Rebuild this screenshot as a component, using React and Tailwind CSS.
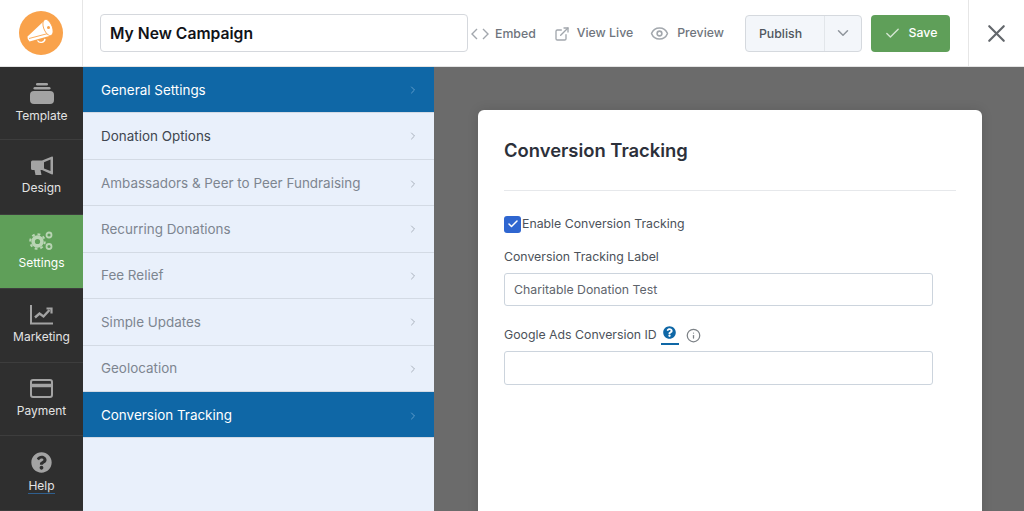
import { ChevronRight, ChevronDown, Check, X, Eye, ExternalLink, Info } from "lucide-react";
import { FaQuestionCircle } from "react-icons/fa";

const NAV_ITEMS = [
  { label: "General Settings", kind: "active", h: "h-[46px] pt-[1px]" },
  { label: "Donation Options", kind: "normal", h: "h-[47px]" },
  { label: "Ambassadors & Peer to Peer Fundraising", kind: "muted", h: "h-[46px] pt-[2px]" },
  { label: "Recurring Donations", kind: "muted", h: "h-[47px]" },
  { label: "Fee Relief", kind: "muted", h: "h-[46px]" },
  { label: "Simple Updates", kind: "muted", h: "h-[47px]" },
  { label: "Geolocation", kind: "muted", h: "h-[46px]" },
  { label: "Conversion Tracking", kind: "active", h: "h-[46px] pt-[2px]" },
];

const LogoIcon = () => (
  <svg width="44" height="44" viewBox="0 0 44 44">
    <circle cx="22" cy="22" r="22" fill="#f9a24b" />
    <path d="M8.5 25.5L25.5 9.5L32 24.5L10.5 30.5Q8 28.5 8.5 25.5Z" fill="white" />
    <path d="M10 27.5L29 22.5" stroke="#f9a24b" strokeWidth="0.9" fill="none" />
    <ellipse cx="29" cy="16.5" rx="4.3" ry="8.6" transform="rotate(-22 29 16.5)" fill="white" stroke="#f9a24b" strokeWidth="0.9" />
    <circle cx="29.5" cy="16.5" r="1.5" fill="#f9a24b" />
    <path d="M18.5 29.5a4 3.6 0 0 0 7.5 -1.6" stroke="white" strokeWidth="1.3" fill="none" />
  </svg>
);

const TemplateIcon = () => (
  <svg width="24" height="21" viewBox="0 0 24 21" fill="#a3a3a3">
    <rect x="6" y="0" width="12" height="2.6" rx="1.3" />
    <rect x="3.5" y="4" width="17" height="2.6" rx="1.3" />
    <rect x="0" y="8" width="24" height="13" rx="4" />
  </svg>
);

const DesignIcon = () => (
  <svg width="22" height="20" viewBox="0 0 22 20" fill="#a3a3a3">
    <path
      fillRule="evenodd"
      d="M1.5 4.5H11L21 0.5Q22 0.3 22 1.5V17.5Q22 18.7 21 18.4L11 14H9.5L10.5 19H4.5L3.5 14H1.5Q0 14 0 12.5V6Q0 4.5 1.5 4.5ZM13 6.2V12.4L19.5 15V3.6Z"
    />
  </svg>
);

const GearsIcon = () => (
  <svg width="25" height="20" viewBox="0 0 25 20" fill="none">
    <circle cx="8.5" cy="10.5" r="4.4" stroke="#b9d4b4" strokeWidth="3.6" />
    <circle cx="8.5" cy="10.5" r="7.3" stroke="#b9d4b4" strokeWidth="2" strokeDasharray="2.8 2.9" />
    <circle cx="20" cy="4" r="2.5" stroke="#b9d4b4" strokeWidth="1.8" />
    <circle cx="20" cy="15.5" r="2.5" stroke="#b9d4b4" strokeWidth="1.8" />
  </svg>
);

const ChartIcon = () => (
  <svg width="23" height="20" viewBox="0 0 23 20" fill="none" stroke="#a3a3a3">
    <path d="M1 0v18.5h22" strokeWidth="2" />
    <path d="M5 12.5l4.5-4 4 3 6-6.5" strokeWidth="2.4" />
    <path d="M16.5 3.5h5v5" strokeWidth="2.2" />
  </svg>
);

const CardIcon = () => (
  <svg width="23" height="19" viewBox="0 0 23 19" fill="none" stroke="#a3a3a3" strokeWidth="2">
    <rect x="1" y="1" width="21" height="17" rx="2" />
    <path d="M1 6.5h21" strokeWidth="3.5" />
  </svg>
);

const SideItem = ({ icon, label, h, active, help }) => (
  <div className={`${h} flex flex-col items-center border-b border-[#3d3d3d] ${active ? "bg-[#5f9f59]" : ""}`}>
    <div className="flex h-[21px] items-center justify-center">{icon}</div>
    <span className={`text-[12px] ${active ? "text-white" : "text-[#e3e3e3]"} ${help ? "mt-[6px] border-b border-[#2f5f8f] leading-[14px]" : active ? "mt-[4px] leading-[16px]" : "mt-[4px] leading-[16px]"}`}>
      {label}
    </span>
  </div>
);

const NavRow = ({ label, kind, h }) => {
  const tone =
    kind === "active"
      ? "bg-[#0f67a6] text-white"
      : kind === "normal"
        ? "text-[#3f4650]"
        : "text-[#7d8590]";
  return (
    <div className={`${h} flex items-center justify-between border-b border-[#d3dae4] pl-[18px] pr-[15px] text-[13.45px] ${tone}`}>
      <span>{label}</span>
      <ChevronRight size={12} className={kind === "active" ? "text-[#5f9ccb]" : "text-[#a9b1bc]"} />
    </div>
  );
};

export default function App() {
  return (
    <div className="flex h-[511px] w-[1024px] flex-col overflow-hidden bg-[#6b6b6b] font-['Inter',sans-serif]">
      <header className="flex h-[67px] shrink-0 items-center border-b border-[#e4e4e4] bg-white">
        <div className="flex h-full w-[83px] shrink-0 items-center justify-center border-r border-[#e6e6e6]">
          <div className="-ml-[1px]">
            <LogoIcon />
          </div>
        </div>
        <div className="ml-[17px] flex h-[38px] w-[368px] items-center rounded border border-[#d5d8dd] pl-[9px] pt-[2px] text-[15.7px] font-semibold text-[#111318]">
          My New Campaign
        </div>
        <div className="ml-[2px] flex items-center pt-[2px] text-[12.3px] font-medium text-[#6f757d]">
          <span className="flex w-[19px] items-center justify-center text-[#a2a7ad]">
            <svg width="18" height="12" viewBox="0 0 18 12" fill="none" stroke="currentColor" strokeWidth="1.4"><path d="M6 1L1 6l5 5M12 1l5 5-5 5" /></svg>
          </span>
          <span className="ml-[6px]">Embed</span>
          <ExternalLink size={16} className="ml-[18px] -mt-[1px] text-[#a2a7ad]" />
          <span className="ml-[7px] -mt-[1px]">View Live</span>
          <Eye size={19} className="ml-[17px] -mt-[1px] text-[#a2a7ad]" />
          <span className="ml-[8px] -mt-[1px]">Preview</span>
        </div>
        <div className="ml-[21px] flex h-[37px] w-[117px] items-center rounded border border-[#d5d9de] bg-[#f3f6fa] text-[12.3px] font-medium text-[#50565e]">
          <span className="flex h-full w-[79px] items-center border-r border-[#e2e6ea] pl-[13px] pt-[2px]">Publish</span>
          <span className="flex flex-1 items-center justify-center text-[#8f959c]">
            <ChevronDown size={18} />
          </span>
        </div>
        <div className="ml-[9px] flex h-[37px] w-[79px] items-center justify-center gap-[8px] rounded bg-[#5f9f59] pt-px text-[12.3px] font-medium text-white">
          <Check size={17} className="text-[#d4e6d2]" />
          <span>Save</span>
        </div>
        <div className="ml-[18px] flex h-full flex-1 items-center justify-center border-l border-[#e6e6e6]">
          <X size={29} strokeWidth={1.8} className="text-[#63676c]" />
        </div>
      </header>

      <div className="flex min-h-0 flex-1">
        <aside className="w-[83px] shrink-0 bg-[#2f2f2f]">
          <SideItem h="h-[73px] pt-[16px]" label="Template" icon={<TemplateIcon />} />
          <SideItem h="h-[75px] pt-[15px]" label="Design" icon={<DesignIcon />} />
          <SideItem h="h-[74px] pt-[15px]" label="Settings" active icon={<GearsIcon />} />
          <SideItem h="h-[74px] pt-[15px]" label="Marketing" icon={<ChartIcon />} />
          <SideItem h="h-[73px] pt-[15px]" label="Payment" icon={<CardIcon />} />
          <SideItem h="h-[75px] pt-[16px]" label="Help" help icon={<FaQuestionCircle size={21} color="#a3a3a3" />} />
        </aside>

        <nav className="w-[351px] shrink-0 bg-[#e9f0fb]">
          {NAV_ITEMS.map((item) => (
            <NavRow key={item.label} {...item} />
          ))}
        </nav>

        <main className="flex-1 pl-[44px] pt-[43px]">
          <section className="h-[500px] w-[504px] rounded-md bg-white px-[26px] pt-[28px] shadow-[0_0_12px_rgba(0,0,0,0.12)]">
            <h2 className="border-b border-[#e6e8eb] pb-[28px] text-[18.4px] leading-[24px] font-semibold text-[#2c303a]">
              Conversion Tracking
            </h2>
            <label className="mt-[24px] flex h-[18px] items-center text-[12.3px] text-[#4c525a]">
              <span className="flex h-[17px] w-[17px] items-center justify-center rounded-[3px] bg-[#2f66d0]">
                <Check size={12} strokeWidth={3} color="white" />
              </span>
              <span className="ml-px">Enable Conversion Tracking</span>
            </label>
            <div className="mt-[15px] text-[12.3px] leading-[18px] text-[#4c525a]">Conversion Tracking Label</div>
            <div className="mt-[7px] flex h-[33px] w-[429px] items-center rounded-[3px] border border-[#ccd4dd] pl-[9px] pt-px text-[12.3px] text-[#5e646c]">
              Charitable Donation Test
            </div>
            <div className="mt-[20px] flex h-[18px] items-center text-[12.3px] text-[#4c525a]">
              <span>Google Ads Conversion ID</span>
              <span className="ml-[4px] flex h-[19px] w-[18px] items-start justify-center border-b-2 border-[#0f67a6]">
                <FaQuestionCircle size={13} color="#0f67a6" />
              </span>
              <Info size={15} className="ml-[7px] text-[#7d8287]" />
            </div>
            <div className="mt-[7px] h-[34px] w-[429px] rounded-[3px] border border-[#ccd4dd]" />
          </section>
        </main>
      </div>
    </div>
  );
}
